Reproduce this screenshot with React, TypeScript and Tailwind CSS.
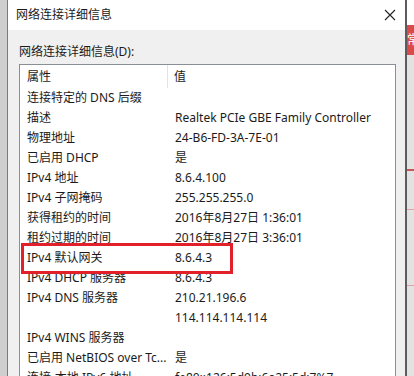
const rows: [string, string][] = [
  ["连接特定的 DNS 后缀", ""],
  ["描述", "Realtek PCIe GBE Family Controller"],
  ["物理地址", "24-B6-FD-3A-7E-01"],
  ["已启用 DHCP", "是"],
  ["IPv4 地址", "8.6.4.100"],
  ["IPv4 子网掩码", "255.255.255.0"],
  ["获得租约的时间", "2016年8月27日 1:36:01"],
  ["租约过期的时间", "2016年8月27日 3:36:01"],
  ["IPv4 默认网关", "8.6.4.3"],
  ["IPv4 DHCP 服务器", "8.6.4.3"],
  ["IPv4 DNS 服务器", "210.21.196.6"],
  ["", "114.114.114.114"],
  ["IPv4 WINS 服务器", ""],
  ["已启用 NetBIOS over Tc...", "是"],
  ["连接-本地 IPv6 地址", "fe80::126:5d9b:6a25:5d:7%7"],
];

export default function App() {
  return (
    <div
      className="w-[414px] h-[376px] overflow-hidden flex bg-[#d6d6d6] text-[12px] text-[#1b1b1b]"
      style={{ fontFamily: '"Noto Sans", "Noto Sans CJK SC", sans-serif' }}
    >
      <div className="w-[7px] shrink-0 bg-[#cfcfcf]" />
      <div className="w-[400px] shrink-0 flex flex-col border-l border-[#7a7a7a] border-r-2 border-r-[#5c5c5c] bg-[#f0f0f0]">
        <div className="h-[30px] shrink-0 bg-white flex items-center justify-between pl-[8px] pr-[8px]">
          <span className="leading-none">网络连接详细信息</span>
          <svg width="12" height="12" viewBox="0 0 12 12" className="mr-[1px]">
            <path d="M1 1L11 11M11 1L1 11" stroke="#222" strokeWidth="1.1" fill="none" />
          </svg>
        </div>
        <div className="flex-1 pl-[11px] pr-[9px] pt-[14px] relative">
          <div className="h-[16px] leading-[16px] mb-[4px]">网络连接详细信息(D):</div>
          <div className="border border-[#8a8f96] bg-white w-[377px] h-[400px]">
            <div className="h-[23px] flex items-center">
              <div className="w-[148px] pl-[7px] h-full flex items-center border-r border-[#e3e3e3]">属性</div>
              <div className="pl-[6px]">值</div>
            </div>
            {rows.map(([k, v], i) => (
              <div key={i} className="h-[20px] flex items-center whitespace-nowrap">
                <div className="w-[149px] pl-[7px] shrink-0">{k}</div>
                <div className="pl-[6px]">{v}</div>
              </div>
            ))}
          </div>
          <div className="absolute left-[13px] top-[213px] w-[212px] h-[31px] border-[3px] border-[#e2202a]" />
        </div>
      </div>
      <div className="w-[7px] shrink-0 flex flex-col bg-[#e3e3e3]">
        <div className="h-[25px] bg-white" />
        <div className="h-[30px] bg-[#d94a48] text-white text-[12px] leading-[30px] overflow-hidden">常</div>
        <div className="h-[114px]" />
        <div className="h-[2px] bg-[#c9545a]" />
        <div className="h-[38px]" />
        <div className="h-[1px] bg-[#e0a0a6]" />
        <div className="h-[75px]" />
        <div className="h-[1px] bg-[#e0a0a6]" />
      </div>
    </div>
  );
}
